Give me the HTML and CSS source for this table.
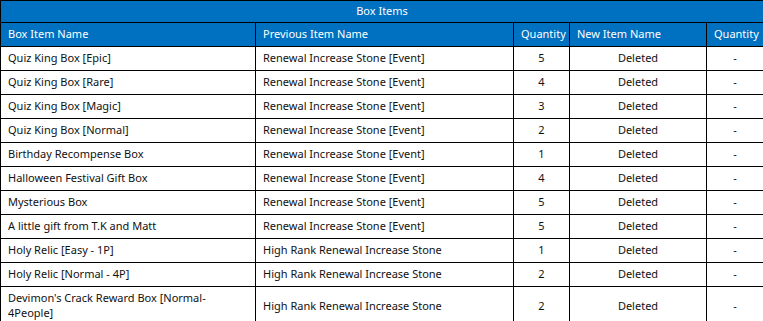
FILE: index.html
```html
<!DOCTYPE html>
<html lang="en">
<head>
    <meta charset="UTF-8">
    <title>Box Items</title>
    <link rel="stylesheet" href="styles.css">
</head>
<body>
    <table class="box-table">
        <colgroup>
            <col class="col-box">
            <col class="col-prev">
            <col class="col-qty">
            <col class="col-new">
            <col class="col-qty2">
        </colgroup>
        <thead>
            <tr><th class="title" colspan="5">Box Items</th></tr>
            <tr class="head">
                <th>Box Item Name</th>
                <th>Previous Item Name</th>
                <th>Quantity</th>
                <th>New Item Name</th>
                <th>Quantity</th>
            </tr>
        </thead>
        <tbody>
            <tr><td>Quiz King Box [Epic]</td><td>Renewal Increase Stone [Event]</td><td class="c">5</td><td class="c">Deleted</td><td class="c">-</td></tr>
            <tr><td>Quiz King Box [Rare]</td><td>Renewal Increase Stone [Event]</td><td class="c">4</td><td class="c">Deleted</td><td class="c">-</td></tr>
            <tr><td>Quiz King Box [Magic]</td><td>Renewal Increase Stone [Event]</td><td class="c">3</td><td class="c">Deleted</td><td class="c">-</td></tr>
            <tr><td>Quiz King Box [Normal]</td><td>Renewal Increase Stone [Event]</td><td class="c">2</td><td class="c">Deleted</td><td class="c">-</td></tr>
            <tr><td>Birthday Recompense Box</td><td>Renewal Increase Stone [Event]</td><td class="c">1</td><td class="c">Deleted</td><td class="c">-</td></tr>
            <tr><td>Halloween Festival Gift Box</td><td>Renewal Increase Stone [Event]</td><td class="c">4</td><td class="c">Deleted</td><td class="c">-</td></tr>
            <tr><td>Mysterious Box</td><td>Renewal Increase Stone [Event]</td><td class="c">5</td><td class="c">Deleted</td><td class="c">-</td></tr>
            <tr><td>A little gift from T.K and Matt</td><td>Renewal Increase Stone [Event]</td><td class="c">5</td><td class="c">Deleted</td><td class="c">-</td></tr>
            <tr><td>Holy Relic [Easy - 1P]</td><td>High Rank Renewal Increase Stone</td><td class="c">1</td><td class="c">Deleted</td><td class="c">-</td></tr>
            <tr><td>Holy Relic [Normal - 4P]</td><td>High Rank Renewal Increase Stone</td><td class="c">2</td><td class="c">Deleted</td><td class="c">-</td></tr>
            <tr><td>Devimon's Crack Reward Box [Normal-4People]</td><td>High Rank Renewal Increase Stone</td><td class="c">2</td><td class="c">Deleted</td><td class="c">-</td></tr>
        </tbody>
    </table>
</body>
</html>
```

FILE: styles.css
```css
body {
    margin: 0;
    font-family: 'Noto Sans', 'Liberation Sans', sans-serif;
    font-size: 11px;
    color: #111;
    background: #fff;
}

.box-table {
    width: 763px;
    border-collapse: collapse;
    table-layout: fixed;
}

.col-box { width: 255px; }
.col-prev { width: 258px; }
.col-qty { width: 56px; }
.col-new { width: 137px; }
.col-qty2 { width: 57px; }

.box-table th,
.box-table td {
    border: 1px solid #000;
    padding: 3px 7px 5px;
    line-height: 15px;
    text-align: left;
    font-weight: normal;
    word-wrap: break-word;
}

.box-table th {
    background-color: #0070c0;
    color: #fff;
    white-space: nowrap;
}

.box-table th.title {
    text-align: center;
    padding: 2px 7px 4px;
}

.box-table td.c {
    text-align: center;
}
```
